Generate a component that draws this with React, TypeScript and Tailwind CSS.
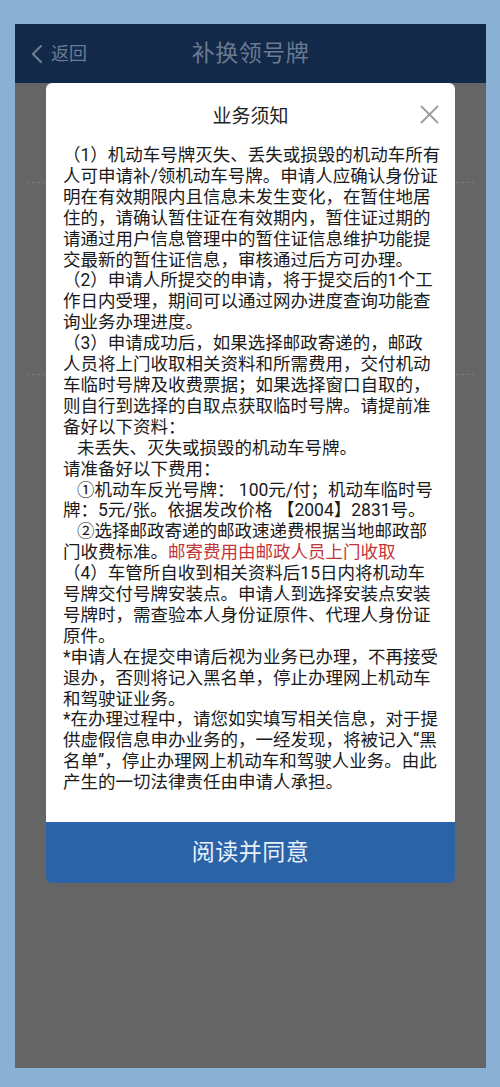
import React from "react";

const FONT = { fontFamily: 'Roboto, "Noto Sans CJK SC", "Noto Sans", sans-serif' };

type Line = { text: string; indent?: boolean; red?: string };

const lines: Line[] = [
  { text: "（1）机动车号牌灭失、丢失或损毁的机动车所有" },
  { text: "人可申请补/领机动车号牌。申请人应确认身份证" },
  { text: "明在有效期限内且信息未发生变化，在暂住地居" },
  { text: "住的，请确认暂住证在有效期内，暂住证过期的" },
  { text: "请通过用户信息管理中的暂住证信息维护功能提" },
  { text: "交最新的暂住证信息，审核通过后方可办理。" },
  { text: "（2）申请人所提交的申请，将于提交后的1个工" },
  { text: "作日内受理，期间可以通过网办进度查询功能查" },
  { text: "询业务办理进度。" },
  { text: "（3）申请成功后，如果选择邮政寄递的，邮政" },
  { text: "人员将上门收取相关资料和所需费用，交付机动" },
  { text: "车临时号牌及收费票据；如果选择窗口自取的，" },
  { text: "则自行到选择的自取点获取临时号牌。请提前准" },
  { text: "备好以下资料：" },
  { text: "未丢失、灭失或损毁的机动车号牌。", indent: true },
  { text: "请准备好以下费用：" },
  { text: "①机动车反光号牌： 100元/付；机动车临时号", indent: true },
  { text: "牌：5元/张。依据发改价格 【2004】2831号。" },
  { text: "②选择邮政寄递的邮政速递费根据当地邮政部", indent: true },
  { text: "门收费标准。", red: "邮寄费用由邮政人员上门收取" },
  { text: "（4）车管所自收到相关资料后15日内将机动车" },
  { text: "号牌交付号牌安装点。申请人到选择安装点安装" },
  { text: "号牌时，需查验本人身份证原件、代理人身份证" },
  { text: "原件。" },
  { text: "*申请人在提交申请后视为业务已办理，不再接受" },
  { text: "退办，否则将记入黑名单，停止办理网上机动车" },
  { text: "和驾驶证业务。" },
  { text: "*在办理过程中，请您如实填写相关信息，对于提" },
  { text: "供虚假信息申办业务的，一经发现，将被记入“黑" },
  { text: "名单”，停止办理网上机动车和驾驶人业务。由此" },
  { text: "产生的一切法律责任由申请人承担。" },
];

function Header() {
  return (
    <div className="h-[59px] bg-[#13294a] flex items-center relative shrink-0">
      <div className="flex items-center pl-[15px] gap-[7px] text-[#6d7c91]">
        <svg width="14" height="20" viewBox="0 0 14 20" fill="none">
          <polyline points="11,2 3,10 11,18" stroke="#6d7c91" strokeWidth="2.2" strokeLinecap="round" strokeLinejoin="round" />
        </svg>
        <span className="text-[18px] leading-none">返回</span>
      </div>
      <div className="absolute inset-0 flex items-center justify-center pointer-events-none">
        <span className="text-[23px] leading-none text-[#6a7a8f] tracking-[0.5px]">补换领号牌</span>
      </div>
    </div>
  );
}

function Backdrop() {
  // page content under the overlay, barely visible
  return (
    <div className="flex-1 bg-[#656565] flex flex-col">
      <div className="h-[100px] mx-[12px] border-b border-dashed border-[#7a7a7a]" />
      <div className="h-[192px] mx-[12px] border-b border-dashed border-[#7a7a7a]" />
      <div className="flex-1" />
    </div>
  );
}

function Notice() {
  return (
    <div className="absolute left-[31px] top-[59px] w-[409px] flex flex-col">
      <div className="bg-white rounded-t-[6px] h-[739px] flex flex-col">
        <div className="relative pt-[22px] h-[46px] flex justify-center">
          <span className="text-[19px] leading-[24px] text-[#222]">业务须知</span>
          <svg className="absolute right-[16px] top-[22px]" width="19" height="19" viewBox="0 0 19 19">
            <line x1="1" y1="1" x2="18" y2="18" stroke="#9b9b9b" strokeWidth="1.8" />
            <line x1="18" y1="1" x2="1" y2="18" stroke="#9b9b9b" strokeWidth="1.8" />
          </svg>
        </div>
        <div className="mt-[16px] pl-[17px] text-[17.5px] leading-[20.9px] text-[#1a1a1a]">
          {lines.map((l, i) => (
            <div key={i} className={l.indent ? "whitespace-nowrap pl-[14px]" : "whitespace-nowrap"}>
              {l.text}
              {l.red && <span className="text-[#c4353a]">{l.red}</span>}
            </div>
          ))}
        </div>
      </div>
      <div className="h-[61px] bg-[#2a63a8] rounded-b-[6px] flex items-center justify-center">
        <span className="text-[23px] leading-none text-[#e9eff7] tracking-[0.5px]">阅读并同意</span>
      </div>
    </div>
  );
}

export default function App() {
  return (
    <div className="w-[500px] h-[1087px] bg-[#8ab0d3] pt-[24px] pl-[15px] pr-[14px]" style={FONT}>
      <div className="relative h-[1044px] flex flex-col">
        <Header />
        <Backdrop />
        <Notice />
      </div>
    </div>
  );
}
